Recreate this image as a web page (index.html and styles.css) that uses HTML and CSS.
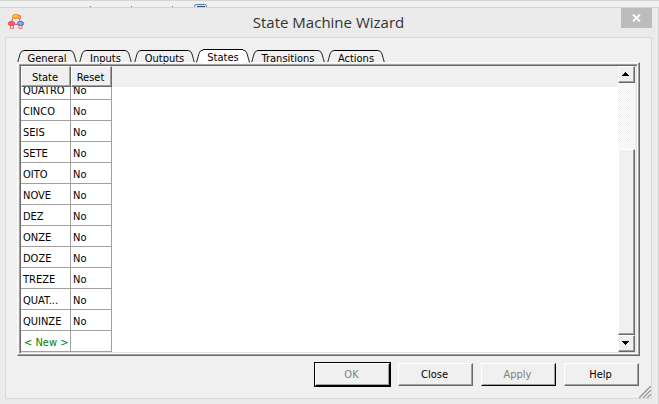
FILE: index.html
```html
<!DOCTYPE html>
<html lang="en">
<head>
<meta charset="utf-8">
<title>State Machine Wizard</title>
<link rel="stylesheet" href="styles.css">
</head>
<body>
<svg class="defs" aria-hidden="true">
  <symbol id="cap-left" viewBox="0 0 7 13"><path d="M.5 13C1.5 10 2 7 3 4Q4 .5 7 .5V13Z" fill="currentColor"/><path d="M.5 13C1.5 10 2 7 3 4Q4 .5 7 .5" fill="none" stroke="#222"/></symbol>
  <symbol id="cap-right" viewBox="0 0 7 13"><path d="M6.500 13C5.500 10 5 7 4 4Q3 .5 0 .5V13Z" fill="currentColor"/><path d="M6.500 13C5.500 10 5 7 4 4Q3 .5 0 .5" fill="none" stroke="#222"/></symbol>
</svg>
<div class="backdrop" aria-hidden="true">
  <svg width="210" height="6" viewBox="0 0 210 6"><path d="M90 5h1M131 5h1M172 5h1" stroke="#777" stroke-width="1" transform="translate(0 .5)"/><path d="M194.500 6V5.500Q194.500 3.500 196.500 3.500H204.500Q206.500 3.500 206.500 5.500V6" fill="#e3edf7" stroke="#56799b"/><path d="M197 5.500h8" stroke="#234d73"/></svg>
</div>
<main class="window">
  <header class="titlebar">
    <svg class="app-icon" width="18" height="18" viewBox="0 0 18 18" aria-hidden="true">
      <path d="M6 4 3.500 10M8 10.500H11M12 4 14 9" fill="none" stroke="#e85b5b"/>
      <path d="M11 1.500h2.500v3h-2M3.500 11v3.500h3V11M12 11v3.500h3V11" fill="none" stroke="#ee6b70"/>
      <ellipse cx="9" cy="2.500" rx="3.500" ry="2" fill="#fdb52a" stroke="#e88a18"/>
      <ellipse cx="4.500" cy="9.500" rx="3.200" ry="2" fill="#f8626a" stroke="#e63c48"/>
      <ellipse cx="13.500" cy="9.500" rx="3.200" ry="2" fill="#7ba3e4" stroke="#456fbd"/>
      <path d="M7.500 2h2" stroke="#ffe27a"/><path d="M12 9h2" stroke="#a6c5f2"/>
    </svg>
    <h1>State Machine Wizard</h1>
    <button class="close" aria-label="Close window"><svg width="9" height="8" viewBox="0 0 9 8"><path d="M1 .5 8 7.500M8 .5 1 7.500" stroke="#fff" stroke-width="1.800"/></svg></button>
  </header>
  <section class="client">
    <nav class="tabs" role="tablist">
      <button class="tab general" role="tab"><svg><use href="#cap-left"/></svg><span>General</span><svg><use href="#cap-right"/></svg></button>
      <button class="tab inputs" role="tab"><svg><use href="#cap-left"/></svg><span>Inputs</span><svg><use href="#cap-right"/></svg></button>
      <button class="tab outputs" role="tab"><svg><use href="#cap-left"/></svg><span>Outputs</span><svg><use href="#cap-right"/></svg></button>
      <button class="tab states active" role="tab" aria-selected="true"><svg><use href="#cap-left"/></svg><span>States</span><svg><use href="#cap-right"/></svg></button>
      <button class="tab transitions" role="tab"><svg><use href="#cap-left"/></svg><span>Transitions</span><svg><use href="#cap-right"/></svg></button>
      <button class="tab actions" role="tab"><svg><use href="#cap-left"/></svg><span>Actions</span><svg><use href="#cap-right"/></svg></button>
    </nav>
    <div class="pane">
      <div class="view">
        <div class="sheet">
          <table>
            <colgroup><col class="col-state"><col class="col-reset"></colgroup>
            <thead><tr><th scope="col">State</th><th scope="col">Reset</th></tr></thead>
            <tbody>
              <tr class="cut"><td><div>QUATRO</div></td><td><div>No</div></td></tr>
              <tr><td>CINCO</td><td>No</td></tr>
              <tr><td>SEIS</td><td>No</td></tr>
              <tr><td>SETE</td><td>No</td></tr>
              <tr><td>OITO</td><td>No</td></tr>
              <tr><td>NOVE</td><td>No</td></tr>
              <tr><td>DEZ</td><td>No</td></tr>
              <tr><td>ONZE</td><td>No</td></tr>
              <tr><td>DOZE</td><td>No</td></tr>
              <tr><td>TREZE</td><td>No</td></tr>
              <tr><td>QUAT...</td><td>No</td></tr>
              <tr><td>QUINZE</td><td>No</td></tr>
              <tr class="new"><td>&lt; New &gt;</td><td></td></tr>
            </tbody>
          </table>
        </div>
        <div class="scrollbar">
          <button class="arrow" aria-label="Scroll up"><svg width="7" height="4" viewBox="0 0 7 4" shape-rendering="crispEdges"><path d="M3 0h1v1h1v1h1v1h1v1H0V3h1V2h1V1h1z"/></svg></button>
          <div class="track"><div class="thumb"></div></div>
          <button class="arrow" aria-label="Scroll down"><svg width="7" height="4" viewBox="0 0 7 4" shape-rendering="crispEdges"><path d="M0 0h7v1H6v1H5v1H4v1H3V3H2V2H1V1H0z"/></svg></button>
        </div>
      </div>
    </div>
    <footer class="actions-bar">
      <button class="btn default" disabled>OK</button>
      <button class="btn">Close</button>
      <button class="btn dark" disabled>Apply</button>
      <button class="btn">Help</button>
    </footer>
    <svg class="grip" width="12" height="12" viewBox="0 0 12 12" aria-hidden="true"><path d="M0 12 12 0M4 12 12 4M8 12 12 8" stroke="#999" stroke-width="1.500"/><path d="M2 12 12 2M6 12 12 6M10 12 12 10" stroke="#fff"/></svg>
  </section>
</main>
</body>
</html>
```
FILE: styles.css
```css
* { box-sizing: border-box; }
body {
  margin: 0;
  min-height: 100vh;
  display: flex;
  flex-direction: column;
  background: #f0f0f0;
  color: #000;
  font: 11px/14px "DejaVu Sans Condensed", "Noto Sans", sans-serif;
}
button { font: inherit; color: inherit; padding: 0; margin: 0; border: 0; background: none; }
svg { display: block; flex: none; }
.defs { position: absolute; width: 0; height: 0; }
.backdrop { height: 7px; border-top: 1px solid #d5d5d5; }

.window {
  flex: 1;
  display: flex;
  flex-direction: column;
  padding: 0 6px 5px 5px;
  background: #ebebeb;
  border: solid #d3d3d3;
  border-width: 1px 1px 0 0;
}
.titlebar { display: grid; grid-template-columns: 31px 1fr 31px; height: 29px; }
.app-icon { margin: 6px 0 0 2px; }
.titlebar h1 {
  margin: 0;
  text-align: center;
  font: 15px/28px "Open Sans", "Noto Sans", sans-serif;
  color: #333;
}
.close { height: 20px; background: #bcbcbc; display: flex; align-items: center; justify-content: center; }

.client {
  position: relative;
  flex: 1;
  display: flex;
  flex-direction: column;
  padding: 11px 11px 12px;
  background: #f0f0f0;
  border: 1px solid #d9d9d9;
}
.tabs { display: flex; align-items: flex-end; gap: 2px; height: 13px; }
.tab { display: flex; height: 12px; color: #f0f0f0; }
.tab svg { width: 7px; height: 13px; }
.tab span {
  flex: 1;
  height: 12px;
  padding-top: 1px;
  border-top: 1px solid #000;
  color: #000;
  text-align: center;
  white-space: nowrap;
}
.tab.active { position: relative; height: 13px; margin: 0 -1px; color: #fff; }
.tab.active span { height: 15px; background: #fff; }
.tab.active svg { height: 14px; }
.general { width: 60px; }
.inputs { width: 53px; }
.outputs { width: 61px; }
.states { width: 54px; }
.transitions { width: 74px; }
.actions { width: 58px; }

.pane {
  flex: 1;
  display: flex;
  border: 1px solid;
  border-color: #fff #696969 #696969 #fff;
  box-shadow: inset -1px -1px #a0a0a0;
  padding: 1px;
}
.view {
  flex: 1;
  display: flex;
  padding: 1px 2px 1px 1px;
  border: 1px solid;
  border-color: #a0a0a0 #fff #fff #a0a0a0;
  box-shadow: inset 1px 1px #696969, inset -1px -1px #e3e3e3;
}
.sheet { flex: 1; background: linear-gradient(#f0f0f0 21px, #fff 21px); }
table { table-layout: fixed; width: 91px; border-collapse: separate; border-spacing: 0; }
.col-state { width: 50px; }
.col-reset { width: 41px; }
th {
  height: 21px;
  padding: 2px 2px 0 0;
  font-weight: normal;
  background: #f0f0f0;
  border: 1px solid;
  border-color: #fff #696969 #696969 #fff;
  box-shadow: inset -1px -1px #a0a0a0;
}
td {
  height: 21px;
  padding: 3px 0 0 2px;
  white-space: nowrap;
  background: #fff;
  border: solid #a0a0a0;
  border-width: 0 1px 1px 0;
}
.cut td { height: 13px; padding-top: 0; }
.cut div { display: flex; align-items: flex-end; height: 12px; padding-bottom: 1px; overflow: hidden; }
.new td { color: #008000; padding-left: 3px; }

.scrollbar { display: flex; flex-direction: column; width: 17px; }
.arrow, .thumb, .btn {
  background: #f0f0f0;
  border: 1px solid;
  border-color: #fff #696969 #696969 #fff;
  box-shadow: inset -1px -1px #a0a0a0;
}
.arrow { height: 17px; padding: 0 2px 2px 0; display: flex; align-items: center; justify-content: center; }
.track {
  flex: 1;
  display: flex;
  flex-direction: column;
  justify-content: flex-end;
  background: repeating-conic-gradient(#f0f0f0 0 25%, #fff 0 50%) 0 0 / 2px 2px;
}
.thumb { height: 74%; }

.actions-bar { display: flex; justify-content: flex-end; gap: 8px; margin-top: 7px; padding-right: 1px; }
.btn { width: 75px; height: 23px; padding: 1px 2px 0 0; }
.btn:disabled { color: #808080; }
.btn.default { outline: 1px solid #000; border-color: #fff #000 #000 #fff; }
.btn.dark { border-color: #fff #000 #000 #fff; }
.grip { position: absolute; right: 0; bottom: 0; }
```
